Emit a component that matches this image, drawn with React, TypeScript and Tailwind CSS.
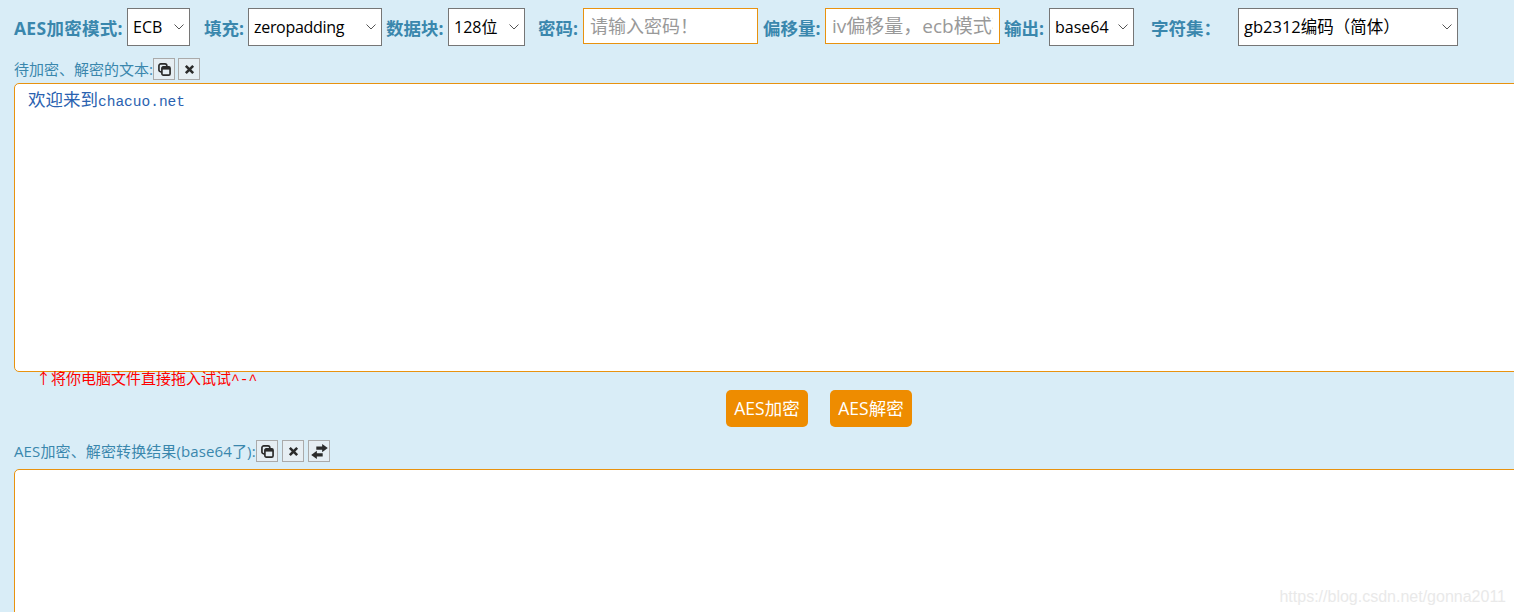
import React from 'react';

const CopyIcon = () => (
  <svg viewBox="0 0 14 14" className="w-[13px] h-[13px]" fill="none" stroke="#2b2b2b" strokeWidth="1.8">
    <rect x="1" y="1" width="8.5" height="8.5" rx="2" />
    <rect x="4.2" y="4.2" width="8.8" height="8.8" rx="1.5" fill="#e6eef3" />
    <path d="M4.2 5.6h8.800" strokeWidth="3" />
  </svg>
);

const CloseIcon = () => (
  <svg viewBox="0 0 12 12" className="w-[11px] h-[11px]" fill="none" stroke="#2b2b2b" strokeWidth="2.8">
    <path d="M2 2l8 8M10 2l-8 8" />
  </svg>
);

const SwapIcon = () => (
  <svg viewBox="0 0 16 14" className="w-[17px] h-[15px]" fill="#2b2b2b">
    <path d="M5 2.200h5.500V0L15.800 3.800 10.500 7.600V5.400H5z" />
    <path d="M11 8.600H5.500V6.400L0.200 10.200 5.500 14V11.800H11z" />
  </svg>
);

const IconBtn = ({ children }: { children: React.ReactNode }) => (
  <button className="w-[22px] h-[22px] flex items-center justify-center border border-[#aaaaaa] bg-[#e6eef3] shrink-0">
    {children}
  </button>
);

const Label = ({ children, className = '' }: { children: React.ReactNode; className?: string }) => (
  <label className={`font-bold text-[17.5px] leading-[40px] text-[#3a87ad] whitespace-nowrap shrink-0 ${className}`}>
    {children}
  </label>
);

const Select = ({ value, className, textClass = 'text-[16px]' }: { value: string; className: string; textClass?: string }) => (
  <div className={`relative h-[38px] shrink-0 ${className}`}>
    <select
      defaultValue={value}
      className={`appearance-none w-full h-full border border-[#767676] bg-white pl-[5px] text-black outline-none ${textClass}`}
    >
      <option>{value}</option>
    </select>
    <svg viewBox="0 0 10 6" className="absolute right-[6px] top-[16px] w-[10px] h-[6px] pointer-events-none" fill="none" stroke="#555" strokeWidth="1">
      <path d="M0.500 0.500L5 5l4.500-4.500" />
    </svg>
  </div>
);

const Input = ({ placeholder, className }: { placeholder: string; className: string }) => (
  <input
    placeholder={placeholder}
    className={`h-[36px] shrink-0 border border-[#e8920f] bg-white px-[6px] placeholder:text-[#999999] outline-none ${className}`}
  />
);

const App: React.FC = () => {
  return (
    <div
      className="relative w-[1514px] h-[612px] overflow-hidden bg-[#d9edf7] pl-[14px]"
      style={{ fontFamily: '"Open Sans", "Noto Sans CJK SC", sans-serif' }}
    >
      <div className="flex items-start pt-2 h-[50px]">
        <Label className="w-[113px] tracking-[0.3px]">AES加密模式:</Label>
        <Select value="ECB" className="w-[63px]" />
        <Label className="ml-[14px] w-[44px]">填充:</Label>
        <Select value="zeropadding" className="w-[134px]" textClass="text-[16px] tracking-[-0.3px]" />
        <Label className="ml-[4px] w-[62px]">数据块:</Label>
        <Select value="128位" className="w-[77px]" />
        <Label className="ml-[13px] w-[45px]">密码:</Label>
        <Input placeholder="请输入密码！" className="w-[175px] text-[18px]" />
        <Label className="ml-[5px] w-[62px]">偏移量:</Label>
        <Input placeholder="iv偏移量，ecb模式不用填写！" className="w-[175px] text-[19px]" />
        <Label className="ml-[4px] w-[45px]">输出:</Label>
        <Select value="base64" className="w-[85px]" />
        <Label className="ml-[17px] w-[87px]">字符集：</Label>
        <Select value="gb2312编码（简体）" className="w-[220px]" textClass="text-[16.5px]" />
      </div>

      <div className="flex items-center h-[22px] mt-[8px] gap-[3px] text-[15px] text-[#3a87ad]">
        <span className="w-[136px] whitespace-nowrap">待加密、解密的文本:</span>
        <IconBtn><CopyIcon /></IconBtn>
        <IconBtn><CloseIcon /></IconBtn>
      </div>

      <div className="mt-[3px] w-[1600px] h-[289px] border border-[#e8920f] rounded-[5px] bg-white px-[13px] pt-[3px] text-[#2a62b0] text-[17.5px] leading-[24px]">
        欢迎来到<span className="text-[14.5px]" style={{ fontFamily: '"Liberation Mono", monospace' }}>chacuo.net</span>
      </div>

      <div className="pl-[22px] h-[18px] -mt-[1px] mb-[1px] text-[15px] leading-[14px] text-[#ff0000] whitespace-nowrap">
        ↑将你电脑文件直接拖入试试<span className="text-[14.5px]" style={{ fontFamily: '"Liberation Mono", monospace' }}>^-^</span>
      </div>

      <div className="flex justify-center gap-[22px] w-[1610px]">
        <button className="w-[82px] h-[37px] rounded-[5px] bg-[#ee8c00] text-white text-[17.5px]">AES加密</button>
        <button className="w-[82px] h-[37px] rounded-[5px] bg-[#ee8c00] text-white text-[17.5px]">AES解密</button>
      </div>

      <div className="flex items-center h-[22px] mt-[13px] text-[15px] text-[#3a87ad]">
        <span className="w-[242px] whitespace-nowrap tracking-[0.12px]">AES加密、解密转换结果(base64了):</span>
        <div className="flex gap-[4px]">
          <IconBtn><CopyIcon /></IconBtn>
          <IconBtn><CloseIcon /></IconBtn>
          <IconBtn><SwapIcon /></IconBtn>
        </div>
      </div>

      <textarea className="block mt-[7px] w-[1600px] h-[200px] border border-[#e8920f] rounded-[5px] bg-white resize-none outline-none" />

      <span
        className="absolute right-[8px] bottom-[3px] text-[16px] text-[#e9e9e9]"
        style={{ fontFamily: '"Liberation Sans", sans-serif' }}
      >
        https://blog.csdn.net/gonna2011
      </span>
    </div>
  );
};

export default App;
